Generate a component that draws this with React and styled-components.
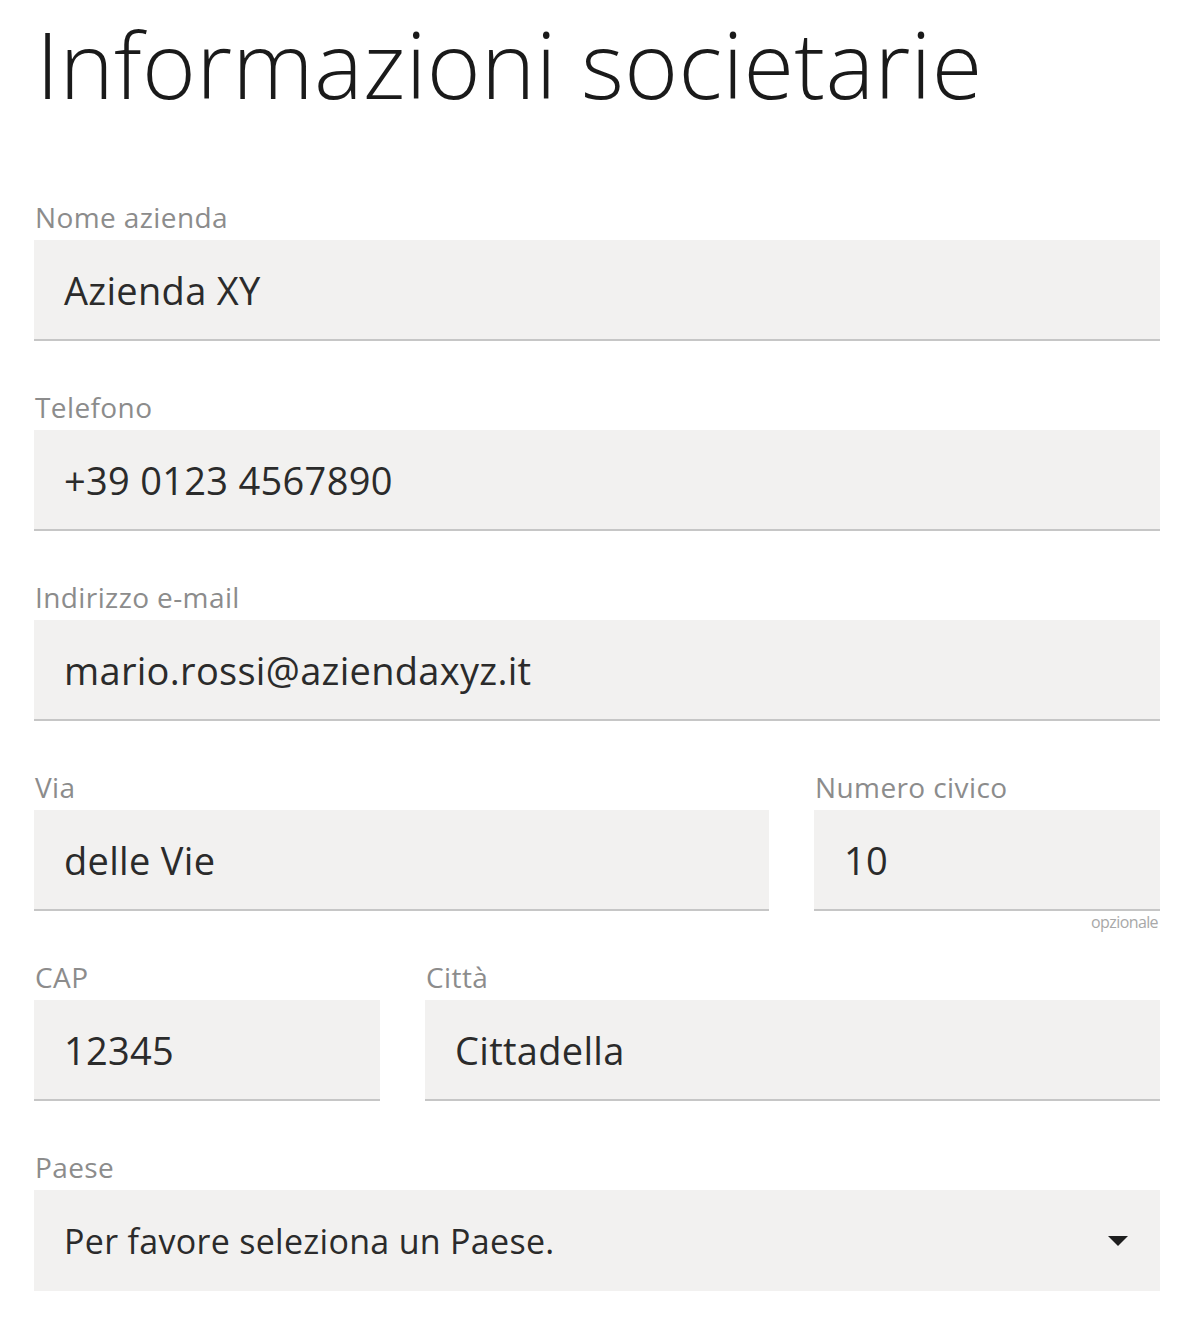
import React from "react";
import styled, { createGlobalStyle } from "styled-components";

const GlobalStyle = createGlobalStyle`
	body {
		margin: 0;
		background: #ffffff;
		font-family: "Open Sans", "Noto Sans", sans-serif;
	}
`;

const Page = styled.div`
	width: 1126px;
	padding: 12px 40px 0 34px;
`;

const Title = styled.h1`
	margin: 0 0 0 2px;
	font-size: 92px;
	font-weight: 300;
	line-height: 104px;
	letter-spacing: 0.3px;
	color: #1a1a1a;
`;

const Form = styled.form`
	display: flex;
	flex-direction: column;
	gap: 51px;
	margin-top: 86px;
`;

const Row = styled.div`
	display: grid;
	grid-template-columns: ${(props) => props.$cols};
	column-gap: 45px;
`;

const Field = styled.div`
	display: flex;
	flex-direction: column;
	position: relative;
`;

const Label = styled.label`
	font-size: 28px;
	line-height: 30px;
	height: 30px;
	margin: 0 0 8px 1px;
	color: #8c8c8c;
	letter-spacing: 0.4px;
`;

const Input = styled.div`
	box-sizing: border-box;
	height: 101px;
	padding: 0 30px;
	display: flex;
	align-items: center;
	justify-content: space-between;
	background: #f2f1f0;
	border-bottom: ${(props) => (props.$select ? "0" : "2px solid #c6c6c6")};
	font-size: ${(props) => (props.$select ? "34px" : "38px")};
	letter-spacing: 0.3px;
	color: #2b2b2b;
`;

const Hint = styled.span`
	position: absolute;
	right: 2px;
	top: 139px;
	font-size: 16px;
	color: #a8a8a8;
	letter-spacing: -0.6px;
`;

const Caret = styled.span`
	width: 0;
	height: 0;
	margin-right: 2px;
	border-left: 10px solid transparent;
	border-right: 10px solid transparent;
	border-top: 10px solid #1e1e1e;
`;

const FormField = ({ label, value, hint, select }) => (
	<Field>
		<Label>{label}</Label>
		<Input $select={select}>
			<span>{value}</span>
			{select && <Caret />}
		</Input>
		{hint && <Hint>{hint}</Hint>}
	</Field>
);

const App = () => (
	<>
		<GlobalStyle />
		<Page>
			<Title>Informazioni societarie</Title>
			<Form>
				<FormField label='Nome azienda' value='Azienda XY' />
				<FormField label='Telefono' value='+39 0123 4567890' />
				<FormField label='Indirizzo e-mail' value='mario.rossi@aziendaxyz.it' />
				<Row $cols='735px 1fr'>
					<FormField label='Via' value='delle Vie' />
					<FormField label='Numero civico' value='10' hint='opzionale' />
				</Row>
				<Row $cols='346px 1fr'>
					<FormField label='CAP' value='12345' />
					<FormField label='Città' value='Cittadella' />
				</Row>
				<FormField label='Paese' value='Per favore seleziona un Paese.' select />
			</Form>
		</Page>
	</>
);

export default App;
